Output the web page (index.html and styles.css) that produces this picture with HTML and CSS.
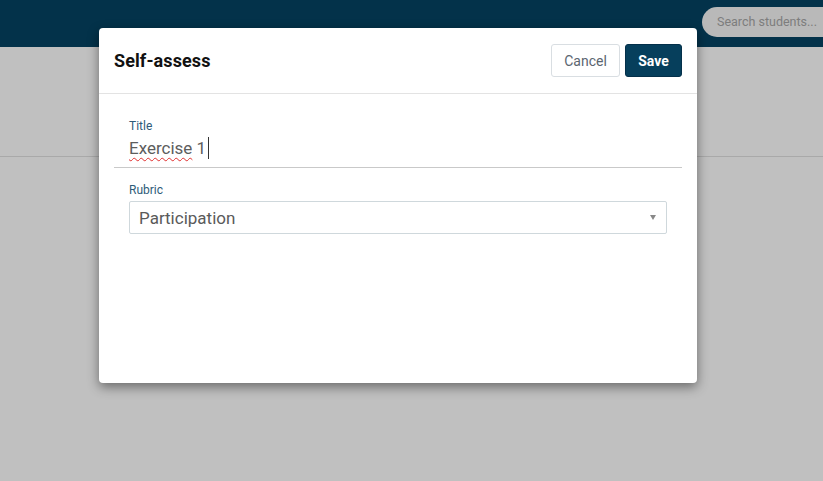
FILE: index.html
```html
<!DOCTYPE html>
<html>
<head>
<meta charset="utf-8">
<link rel="stylesheet" href="styles.css">
</head>
<body>
<header class="topbar">
  <div class="search">Search students...</div>
</header>
<main class="page">
  <div class="band"></div>
</main>
<div class="modal">
  <div class="modal-head">
    <h1 class="modal-title">Self-assess</h1>
    <div class="actions">
      <button class="btn btn-cancel">Cancel</button>
      <button class="btn btn-save">Save</button>
    </div>
  </div>
  <div class="modal-body">
    <div class="field field-title">
      <label class="label">Title</label>
      <div class="input"><span class="spell">Exercise</span> 1<span class="caret"></span></div>
    </div>
    <div class="field field-rubric">
      <label class="label">Rubric</label>
      <div class="select">
        <span>Participation</span>
        <span class="arrow"></span>
      </div>
    </div>
  </div>
</div>
</body>
</html>
```
FILE: styles.css
```css
* { box-sizing: border-box; }
html, body { margin: 0; height: 100%; }
body {
  font-family: Roboto, "Noto Sans", sans-serif;
  background: #c0c0c0;
  overflow: hidden;
}
.topbar {
  height: 47px;
  background: #03324a;
  display: flex;
  justify-content: flex-end;
  align-items: flex-start;
  padding-top: 7px;
}
.search {
  width: 121px;
  height: 30px;
  background: #b9b9b9;
  border-radius: 15px 0 0 15px;
  color: #7d7d7d;
  font-size: 12.5px;
  line-height: 30px;
  padding-left: 15px;
  white-space: nowrap;
  overflow: hidden;
}
.page { height: calc(100% - 47px); }
.band {
  height: 110px;
  border-bottom: 1px solid #a9a9a9;
}
.modal {
  position: absolute;
  left: 99px;
  top: 28px;
  width: 598px;
  height: 355px;
  background: #fff;
  border-radius: 4px;
  box-shadow: 0 4px 12px rgba(0,0,0,0.45);
}
.modal-head {
  height: 66px;
  border-bottom: 1px solid #e3e3e3;
  display: flex;
  align-items: center;
  justify-content: space-between;
  padding: 0 15px 0 15px;
}
.modal-title {
  margin: 0;
  font-size: 18px;
  font-weight: 700;
  color: #111;
  letter-spacing: 0.1px;
}
.actions { display: flex; gap: 5px; }
.btn {
  height: 33px;
  font-family: Roboto, sans-serif;
  font-size: 14px;
  border-radius: 3px;
  cursor: pointer;
}
.btn-cancel {
  width: 69px;
  background: #fff;
  border: 1px solid #d9dee2;
  color: #5b6570;
}
.btn-save {
  width: 57px;
  background: #063f5c;
  border: 1px solid #04304a;
  color: #fff;
  font-weight: 700;
}
.modal-body { padding: 0 15px; }
.field-title {
  border-bottom: 1px solid #c9c9c9;
  padding: 25px 15px 7px;
}
.label {
  display: block;
  font-size: 12px;
  color: #2d5b78;
  line-height: 14px;
}
.input {
  font-size: 17px;
  color: #5d5d5d;
  line-height: 24px;
  margin-top: 3px;
  display: flex;
  align-items: center;
  white-space: pre;
}
.spell {
  text-decoration: underline wavy #e03030;
  text-decoration-thickness: 1px;
  text-underline-offset: 3px;
}
.caret {
  display: inline-block;
  width: 1px;
  height: 22px;
  background: #333;
  margin-left: 2px;
}
.field-rubric { padding: 15px 15px 0; }
.select {
  margin-top: 4px;
  width: 538px;
  height: 33px;
  border: 1px solid #cfd8dc;
  border-radius: 2px;
  display: flex;
  align-items: center;
  justify-content: space-between;
  padding: 0 10px 0 9px;
  font-size: 17px;
  color: #5a5a5a;
}
.arrow {
  width: 0; height: 0;
  border-left: 3px solid transparent;
  border-right: 3px solid transparent;
  border-top: 5px solid #888;
}
```
